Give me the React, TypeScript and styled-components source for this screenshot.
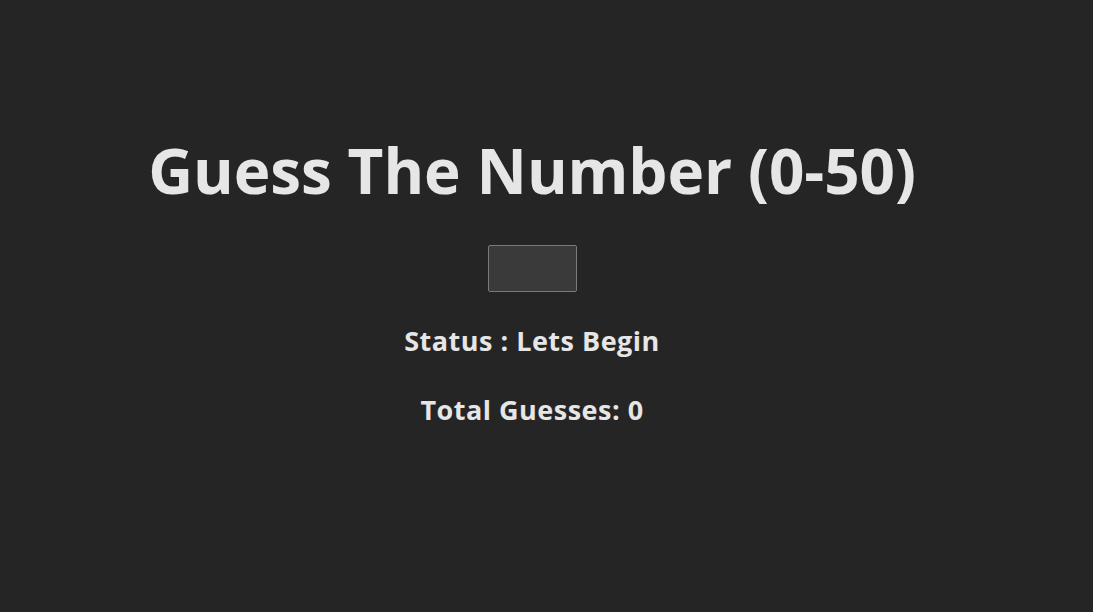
import React from "react";
import styled, { createGlobalStyle } from "styled-components";

const Global = createGlobalStyle`
  html, body {
    margin: 0;
    padding: 0;
    background: #252525;
    height: 100%;
  }
  body {
    font-family: "Open Sans", "Noto Sans", sans-serif;
    color: #e6e6e6;
  }
`;

const Page = styled.main`
  width: 1064px;
  display: flex;
  flex-direction: column;
  align-items: center;
  padding-top: 128px;
`;

const Title = styled.h1`
  margin: 0;
  font-size: 62px;
  font-weight: 700;
  line-height: 84px;
  letter-spacing: -0.1px;
  white-space: nowrap;
`;

const GuessInput = styled.input`
  box-sizing: border-box;
  margin-top: 33px;
  width: 89px;
  height: 47px;
  background: #3a3a3a;
  border: 1px solid #7a7a7a;
  border-radius: 2px;
  color: #e6e6e6;
  font-size: 20px;
  text-align: center;
  outline: none;
`;

const Info = styled.h2<{ $gap: number }>`
  margin: ${(p) => p.$gap}px 0 0;
  font-size: 27px;
  font-weight: 700;
  line-height: 36px;
  letter-spacing: 0.5px;
  white-space: nowrap;
`;

export default function App() {
  return (
    <>
      <Global />
      <Page>
        <Title>Guess The Number (0-50)</Title>
        <GuessInput type="text" />
        <Info $gap={31}>Status : Lets Begin</Info>
        <Info $gap={33}>Total Guesses: 0</Info>
      </Page>
    </>
  );
}
